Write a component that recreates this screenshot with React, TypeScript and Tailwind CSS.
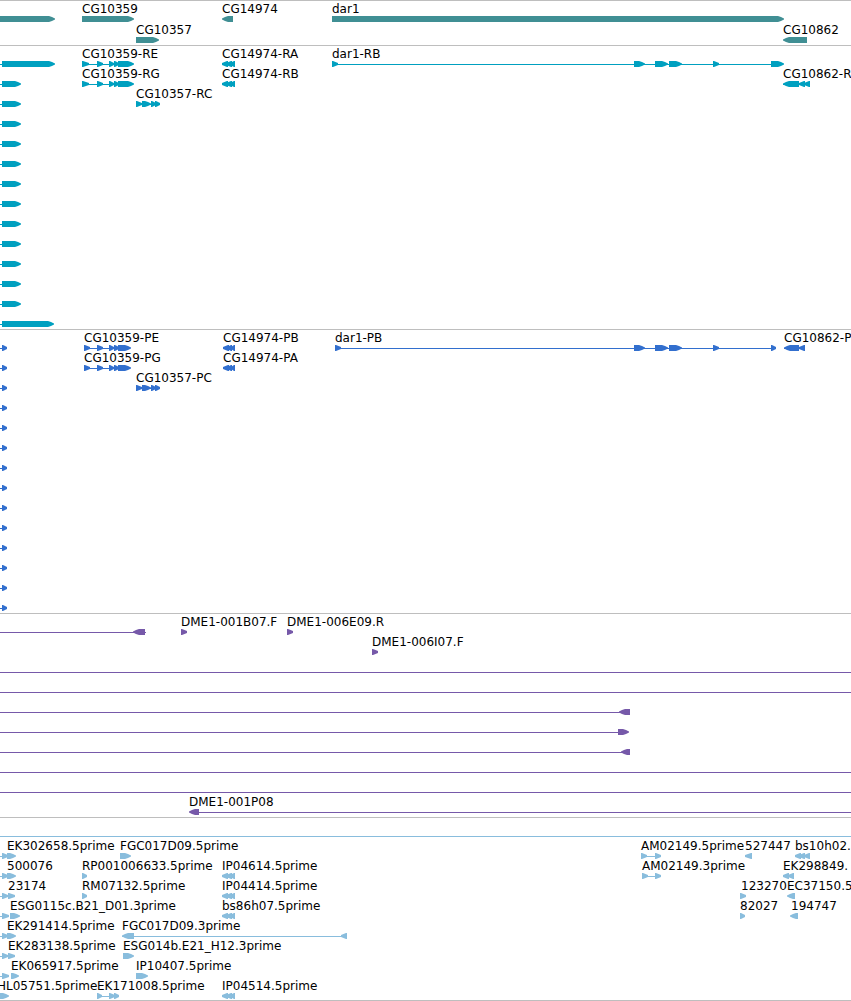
type Strand = '+' | '-';

type Feature = {
  name?: string;
  x?: number;
  strand: Strand;
  blocks: [number, number][];
  // [start, end]; without an end the line runs to the right edge
  line?: [number, number?];
};

type Track = {
  id: string;
  label: string;
  color: string;
  spacing: string;
  rows: Feature[][];
};

const f = (
  name: string,
  x: number,
  strand: Strand,
  blocks: [number, number][],
  line?: [number, number?],
): Feature => ({ name, x, strand, blocks, line });

const plain = (strand: Strand, blocks: [number, number][], line?: [number, number?]): Feature => ({
  strand,
  blocks,
  line,
});

const edge = (...blocks: [number, number][]) => plain('+', blocks, [0, blocks[blocks.length - 1][0]]);
const through = () => plain('+', [], [0]);

const RE_BLOCKS: [number, number][] = [[82, 89], [97, 103], [109, 114], [114, 119], [118, 134]];
const PE_BLOCKS: [number, number][] = [[84, 90], [97, 103], [109, 114], [114, 119], [118, 131]];
const RC_BLOCKS: [number, number][] = [[136, 142], [142, 151], [151, 156], [155, 160]];
const RA_BLOCKS: [number, number][] = [[222, 228], [226, 232], [230, 235]];
const PA_BLOCKS: [number, number][] = [[223, 229], [227, 232], [231, 235]];

const TRACKS: Track[] = [
  {
    id: 'genes',
    label: 'Genes',
    color: 'text-[#408f94]',
    spacing: 'gap-px pb-px',
    rows: [
      [
        plain('+', [[-6, 55]]),
        f('CG10359', 82, '+', [[82, 134]]),
        f('CG14974', 222, '-', [[222, 233]]),
        f('dar1', 332, '+', [[332, 784]]),
      ],
      [f('CG10357', 136, '+', [[136, 159]]), f('CG10862', 783, '-', [[783, 807]])],
    ],
  },
  {
    id: 'transcripts',
    label: 'Transcripts',
    color: 'text-[#00a0c0]',
    spacing: 'pb-px',
    rows: [
      [
        edge([2, 55]),
        f('CG10359-RE', 82, '+', RE_BLOCKS),
        f('CG14974-RA', 222, '-', RA_BLOCKS),
        f('dar1-RB', 332, '+', [[332, 338], [634, 645], [655, 668], [669, 682], [713, 719], [771, 784]]),
      ],
      [
        edge([2, 21]),
        f('CG10359-RG', 82, '+', RE_BLOCKS),
        f('CG14974-RB', 222, '-', RA_BLOCKS),
        f('CG10862-R', 783, '-', [[783, 799], [799, 805], [804, 810]]),
      ],
      [edge([2, 21]), f('CG10357-RC', 136, '+', RC_BLOCKS)],
      ...Array.from({ length: 10 }, () => [edge([2, 21])]),
      [edge([2, 54])],
    ],
  },
  {
    id: 'proteins',
    label: 'Proteins',
    color: 'text-[#326fce]',
    spacing: 'pb-px',
    rows: [
      [
        edge([2, 7]),
        f('CG10359-PE', 84, '+', PE_BLOCKS),
        f('CG14974-PB', 223, '-', PA_BLOCKS),
        f('dar1-PB', 335, '+', [[335, 341], [634, 645], [655, 668], [669, 682], [713, 719], [771, 776]]),
        f('CG10862-P', 784, '-', [[784, 799], [799, 805]]),
      ],
      [
        edge([2, 7]),
        f('CG10359-PG', 84, '+', PE_BLOCKS),
        f('CG14974-PA', 223, '-', PA_BLOCKS),
      ],
      [edge([2, 7]), f('CG10357-PC', 136, '+', RC_BLOCKS)],
      ...Array.from({ length: 11 }, () => [edge([2, 7])]),
    ],
  },
  {
    id: 'clones',
    label: 'Clones',
    color: 'text-[#7659a9]',
    spacing: 'pb-px',
    rows: [
      [
        plain('-', [[133, 145]], [0, 146]),
        f('DME1-001B07.F', 181, '+', [[181, 187]]),
        f('DME1-006E09.R', 287, '+', [[287, 293]]),
      ],
      [f('DME1-006I07.F', 372, '+', [[372, 378]])],
      [through()],
      [through()],
      [plain('-', [[619, 630]], [0, 630])],
      [plain('+', [[618, 629]], [0, 620])],
      [plain('-', [[621, 630]], [0, 630])],
      [through()],
      [through()],
      [f('DME1-001P08', 189, '-', [[189, 199]], [192])],
    ],
  },
  {
    id: 'ests',
    label: 'ESTs',
    color: 'text-[#89bddd]',
    spacing: '',
    rows: [
      [through()],
      [
        edge([2, 8], [7, 16]),
        f('EK302658.5prime', 7, '+', []),
        f('FGC017D09.5prime', 120, '+', [[120, 131]]),
        f('AM02149.5prime', 641, '+', [[641, 647], [655, 661]]),
        f('527447', 745, '-', [[745, 752]]),
        f('bs10h02.', 795, '-', [[795, 801], [799, 805], [804, 810]]),
      ],
      [
        edge([2, 8], [7, 16]),
        f('500076', 7, '+', []),
        f('RP001006633.5prime', 82, '+', [[82, 87]]),
        f('IP04614.5prime', 222, '-', RA_BLOCKS),
        f('AM02149.3prime', 642, '+', [[642, 648], [655, 661]]),
        f('EK298849.', 783, '-', [[783, 789], [788, 794]]),
      ],
      [
        edge([2, 8], [8, 15]),
        f('23174', 8, '+', []),
        f('RM07132.5prime', 82, '+', [[82, 87]]),
        f('IP04414.5prime', 222, '-', RA_BLOCKS),
        f('123270', 741, '+', [[740, 746]]),
        f('EC37150.5', 787, '-', [[787, 795]]),
      ],
      [
        edge([2, 9]),
        f('ESG0115c.B21_D01.3prime', 10, '+', [[10, 20]]),
        f('bs86h07.5prime', 222, '-', RA_BLOCKS),
        f('82027', 740, '+', [[740, 745]]),
        f('194747', 791, '-', [[790, 798]]),
      ],
      [
        edge([2, 8], [7, 16]),
        f('EK291414.5prime', 7, '+', []),
        f('FGC017D09.3prime', 122, '-', [[122, 134], [341, 347]]),
      ],
      [
        edge([2, 8], [8, 15]),
        f('EK283138.5prime', 8, '+', []),
        f('ESG014b.E21_H12.3prime', 123, '+', [[123, 134]]),
      ],
      [
        edge([2, 9]),
        f('EK065917.5prime', 11, '+', [[11, 19]]),
        f('IP10407.5prime', 136, '+', [[136, 148]]),
      ],
      [
        f('HL05751.5prime', -3, '+', [[-3, 9]]),
        f('EK171008.5prime', 97, '+', [[97, 102], [109, 115], [114, 119]]),
        f('IP04514.5prime', 222, '-', RA_BLOCKS),
      ],
    ],
  },
];

function blockPoints(start: number, end: number, strand: Strand) {
  const dir = strand === '+' ? 1 : -1;
  const tail = strand === '+' ? start : end;
  const tip = strand === '+' ? end : start;
  if (end - start < 8) {
    return `${tail},0 ${tail + dir},0 ${tip},2 ${tip},4 ${tail + dir},6 ${tail},6`;
  }
  const neck = tip - dir * 6;
  const cheek = tip - dir * 3;
  return `${tail},0 ${neck},0 ${cheek},1 ${tip},2.5 ${tip},3.5 ${cheek},5 ${neck},6 ${tail},6`;
}

function FeatureShape({ feature }: { feature: Feature }) {
  const { blocks, strand } = feature;
  const line = feature.line ?? (blocks.length > 1 ? [blocks[0][0], blocks[blocks.length - 1][1] - 1] : null);
  return (
    <g>
      {line && (
        <line
          x1={line[0]}
          x2={line[1] ?? '100%'}
          y1="3.5"
          y2="3.5"
          stroke="currentColor"
          shapeRendering="crispEdges"
        />
      )}
      {blocks.map(([start, end]) => (
        <polygon key={start} points={blockPoints(start, end, strand)} fill="currentColor" />
      ))}
    </g>
  );
}

function Row({ features }: { features: Feature[] }) {
  return (
    <li className="relative h-5 pt-[13px]">
      {features.map((feature) =>
        feature.name ? (
          <span
            key={feature.name}
            className="absolute top-0 whitespace-nowrap text-black"
            style={{ left: feature.x }}
          >
            {feature.name}
          </span>
        ) : null,
      )}
      <svg className="block h-1.5 w-full" aria-hidden="true">
        {features.map((feature, i) => (
          <FeatureShape key={i} feature={feature} />
        ))}
      </svg>
    </li>
  );
}

export default function App() {
  return (
    <main className="w-full overflow-hidden border-b border-[#bebebe] bg-white font-['DejaVu_Sans',sans-serif] text-[12px] leading-[12px]">
      {TRACKS.map((track) => (
        <section key={track.id} aria-label={track.label} className="border-t border-[#bebebe] pt-0.5">
          <ul className={`flex flex-col ${track.spacing} ${track.color}`}>
            {track.rows.map((features, i) => (
              <Row key={i} features={features} />
            ))}
          </ul>
        </section>
      ))}
    </main>
  );
}
